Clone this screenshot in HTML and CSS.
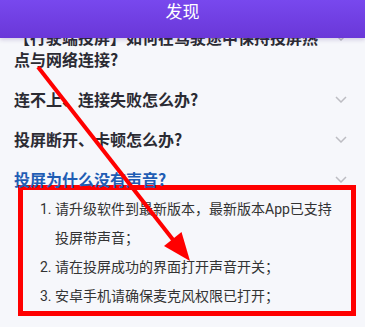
FILE: index.html
```html
<!DOCTYPE html>
<html lang="zh-CN">
<head>
  <meta charset="UTF-8" />
  <meta name="viewport" content="width=device-width, initial-scale=1.0" />
  <title>发现</title>
  <link rel="stylesheet" href="styles.css">
</head>
<body>
  <header class="topbar">
    <div class="title">发现</div>
  </header>

  <div class="faq">
    <div class="faq-item">
      <div class="q">
        <span class="q-text">【行驶端投屏】如何在驾驶途中保持投屏热点与网络连接?</span>
        <svg class="chev" viewBox="0 0 12 7"><path d="M1 1l5 5 5-5" /></svg>
      </div>
    </div>
    <div class="faq-item">
      <div class="q">
        <span class="q-text">连不上、连接失败怎么办?</span>
        <svg class="chev" viewBox="0 0 12 7"><path d="M1 1l5 5 5-5" /></svg>
      </div>
    </div>
    <div class="faq-item">
      <div class="q">
        <span class="q-text">投屏断开、卡顿怎么办?</span>
        <svg class="chev" viewBox="0 0 12 7"><path d="M1 1l5 5 5-5" /></svg>
      </div>
    </div>
    <div class="faq-item open">
      <div class="q">
        <span class="q-text">投屏为什么没有声音?</span>
        <svg class="chev" viewBox="0 0 12 7"><path d="M1 1l5 5 5-5" /></svg>
      </div>
      <div class="answer">
        <ol>
          <li>请升级软件到最新版本，最新版本App已支持投屏带声音；</li>
          <li>请在投屏成功的界面打开声音开关；</li>
          <li>安卓手机请确保麦克风权限已打开；</li>
        </ol>
      </div>
    </div>
  </div>

  <!-- annotation arrow -->
  <svg class="arrow" viewBox="0 0 365 327">
    <line x1="38" y1="67" x2="174" y2="241" />
    <polygon points="190,261 164,246 181.5,232" />
  </svg>
</body>
</html>
```

FILE: styles.css
```css
body {
  margin: 0;
  background-color: #f6f7fb;
  font-family: Roboto, "Noto Sans CJK SC", sans-serif;
  color: #2b2b33;
  overflow: hidden;
  height: 327px;
  position: relative;
}

.topbar {
  position: relative;
  z-index: 2;
  height: 38px;
  background: linear-gradient(180deg, #7848ee, #6a37d8);
  box-shadow: 0 2px 4px rgba(60, 30, 120, 0.18);
}

.title {
  text-align: center;
  color: #fff;
  font-size: 17px;
  line-height: 24px;
}

.faq {
  margin-top: -21px;
}

.q {
  display: flex;
  align-items: flex-start;
  gap: 8px;
  padding: 9px 18px 9px 14px;
}

.q-text {
  flex: 1;
  font-family: "Noto Sans CJK SC", sans-serif;
  font-size: 16px;
  font-weight: bold;
  line-height: 22px;
}

.chev {
  width: 12px;
  height: 7px;
  margin-top: 8px;
  fill: none;
  stroke: #bdbdc3;
  stroke-width: 1.5;
}

.open .q {
  padding-bottom: 0;
}

.open .q-text {
  color: #1f5db4;
}

.answer {
  margin: -5px 9px 0 18px;
  border: 5px solid #f00;
  padding-top: 5px;
  font-size: 14px;
  line-height: 29px;
  color: #333;
}

.answer ol {
  margin: 0;
  padding: 0 12px 0 32px;
}

.arrow {
  position: absolute;
  left: 0;
  top: 0;
  width: 365px;
  height: 327px;
  pointer-events: none;
}

.arrow line {
  stroke: #f00;
  stroke-width: 4;
}

.arrow polygon {
  fill: #f00;
}
```
